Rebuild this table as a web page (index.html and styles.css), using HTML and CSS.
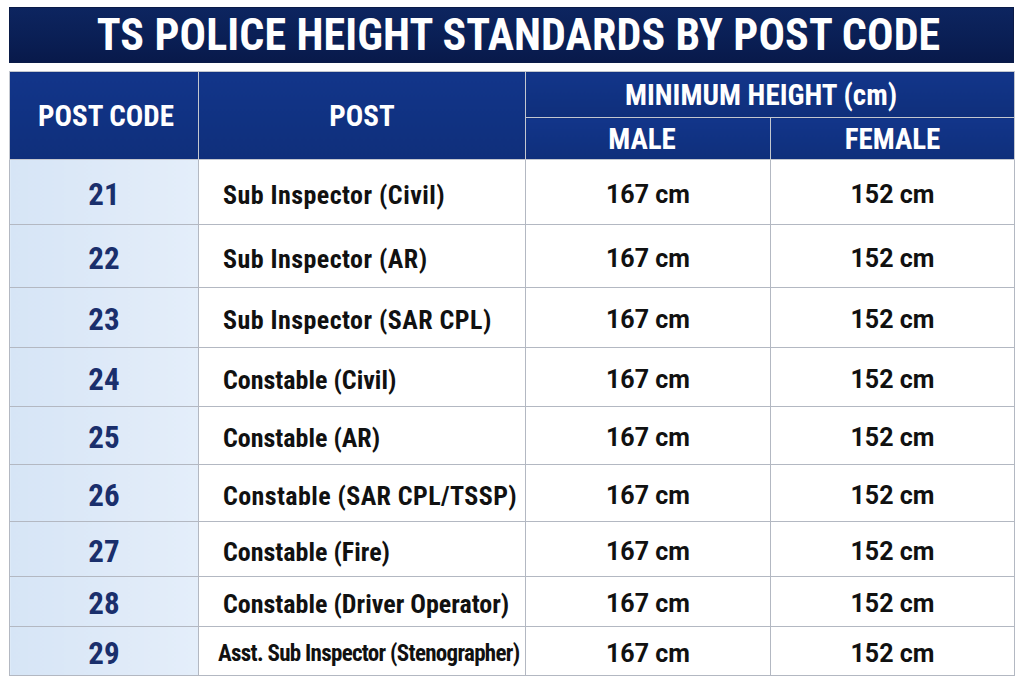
FILE: index.html
```html
<!DOCTYPE html>
<html lang="en">
<head>
<meta charset="utf-8">
<title>TS Police Height Standards</title>
<link rel="stylesheet" href="styles.css">
</head>
<body>
<div class="page">
  <h1 class="title">TS POLICE HEIGHT STANDARDS BY POST CODE</h1>
  <table class="grid">
    <colgroup>
      <col class="c-code"><col class="c-post"><col class="c-male"><col class="c-female">
    </colgroup>
    <thead>
      <tr class="h1">
        <th rowspan="2" class="th-code">POST CODE</th>
        <th rowspan="2" class="th-post">POST</th>
        <th colspan="2" class="th-min">MINIMUM HEIGHT (cm)</th>
      </tr>
      <tr class="h2">
        <th class="th-sub th-male">MALE</th>
        <th class="th-sub th-female">FEMALE</th>
      </tr>
    </thead>
    <tbody>
      <tr><td class="code">21</td><td class="post post-si">Sub Inspector (Civil)</td><td class="val">167 cm</td><td class="val">152 cm</td></tr>
      <tr><td class="code">22</td><td class="post post-si">Sub Inspector (AR)</td><td class="val">167 cm</td><td class="val">152 cm</td></tr>
      <tr><td class="code">23</td><td class="post post-si">Sub Inspector (SAR CPL)</td><td class="val">167 cm</td><td class="val">152 cm</td></tr>
      <tr><td class="code">24</td><td class="post">Constable (Civil)</td><td class="val">167 cm</td><td class="val">152 cm</td></tr>
      <tr><td class="code">25</td><td class="post">Constable (AR)</td><td class="val">167 cm</td><td class="val">152 cm</td></tr>
      <tr><td class="code">26</td><td class="post post-wide">Constable (SAR CPL/TSSP)</td><td class="val">167 cm</td><td class="val">152 cm</td></tr>
      <tr><td class="code">27</td><td class="post">Constable (Fire)</td><td class="val">167 cm</td><td class="val">152 cm</td></tr>
      <tr><td class="code">28</td><td class="post">Constable (Driver Operator)</td><td class="val">167 cm</td><td class="val">152 cm</td></tr>
      <tr><td class="code">29</td><td class="post post-tight">Asst. Sub Inspector (Stenographer)</td><td class="val">167 cm</td><td class="val">152 cm</td></tr>
    </tbody>
  </table>
</div>
</body>
</html>
```
FILE: styles.css
```css
html, body {
  margin: 0;
  padding: 0;
  background: #ffffff;
}

.page {
  padding: 7px 10px 0 9px;
  width: 1005px;
}

.title {
  margin: 0;
  height: 56px;
  padding-left: 14px;
  display: flex;
  align-items: center;
  justify-content: center;
  background: linear-gradient(180deg, #0d2560 0%, #0a1f55 55%, #08194a 100%);
  color: #ffffff;
  font-family: "Roboto Condensed", Roboto, "Liberation Sans", sans-serif;
  font-stretch: condensed;
  font-weight: 700;
  font-size: 44px;
  letter-spacing: 0.1px;
  box-shadow: inset 0 0 0 1px #0a1b48;
}

.grid {
  margin-top: 8px;
  width: 1005px;
  border-collapse: collapse;
  table-layout: fixed;
  border: 1px solid #b3b8c2;
}

.c-code { width: 189px; }
.c-post { width: 327px; }
.c-male { width: 245px; }
.c-female { width: 244px; }

.grid th {
  color: #ffffff;
  font-family: "Roboto Condensed", Roboto, "Liberation Sans", sans-serif;
  font-stretch: condensed;
  font-weight: 700;
  font-size: 29px;
  padding: 0;
  border: 1px solid #c3c7cf;
  background: linear-gradient(180deg, #12358a 0%, #0f2f7b 100%);
}

.th-code, .th-post {
  background: linear-gradient(180deg, #123383 0%, #0e2c74 100%);
}

.th-code { padding-left: 4px !important; }

.h1 { height: 46px; }
.h2 { height: 42px; }

.th-min {
  font-size: 28px;
  padding-right: 18px !important;
  background: linear-gradient(180deg, #143b8b 0%, #113585 100%);
}

.th-sub {
  font-size: 26px;
  background: linear-gradient(180deg, #153d8d 0%, #123787 100%);
}

.th-male { padding-right: 12px !important; }
.th-female { font-size: 25px; }

.grid td {
  border: 1px solid #b3b8c2;
  padding: 0;
  background: #ffffff;
}

.grid tbody tr:nth-child(1) { height: 65px; }
.grid tbody tr:nth-child(2) { height: 63px; }
.grid tbody tr:nth-child(3) { height: 60px; }
.grid tbody tr:nth-child(4) { height: 59px; }
.grid tbody tr:nth-child(5) { height: 58px; }
.grid tbody tr:nth-child(6) { height: 57px; }
.grid tbody tr:nth-child(7) { height: 55px; }
.grid tbody tr:nth-child(8) { height: 50px; }
.grid tbody tr:nth-child(9) { height: 49px; }

.grid td.code {
  text-align: center;
  font-family: "Roboto Condensed", Roboto, "Liberation Sans", sans-serif;
  font-stretch: condensed;
  font-weight: 700;
  font-size: 31px;
  color: #1a2f6c;
  background: linear-gradient(90deg, #d6e5f6 0%, #dfeaf8 60%, #e4eefa 100%);
  padding-top: 4px;
}

.grid td.post {
  text-align: left;
  padding: 5px 0 0 24px;
  font-family: "Roboto Condensed", Roboto, "Liberation Sans", sans-serif;
  font-stretch: condensed;
  font-weight: 700;
  font-size: 26px;
  letter-spacing: 0;
  color: #111111;
  white-space: nowrap;
}

.grid td.post-si {
  letter-spacing: 0.45px;
}

.grid td.post-wide {
  letter-spacing: 0.4px;
}

.grid td.post-tight {
  padding-left: 19px;
  font-size: 23px;
  letter-spacing: -0.7px;
}

.grid td.val {
  text-align: center;
  font-family: Roboto, "Liberation Sans", sans-serif;
  font-weight: 700;
  font-size: 25px;
  color: #111111;
  padding-top: 4px;
}
```
